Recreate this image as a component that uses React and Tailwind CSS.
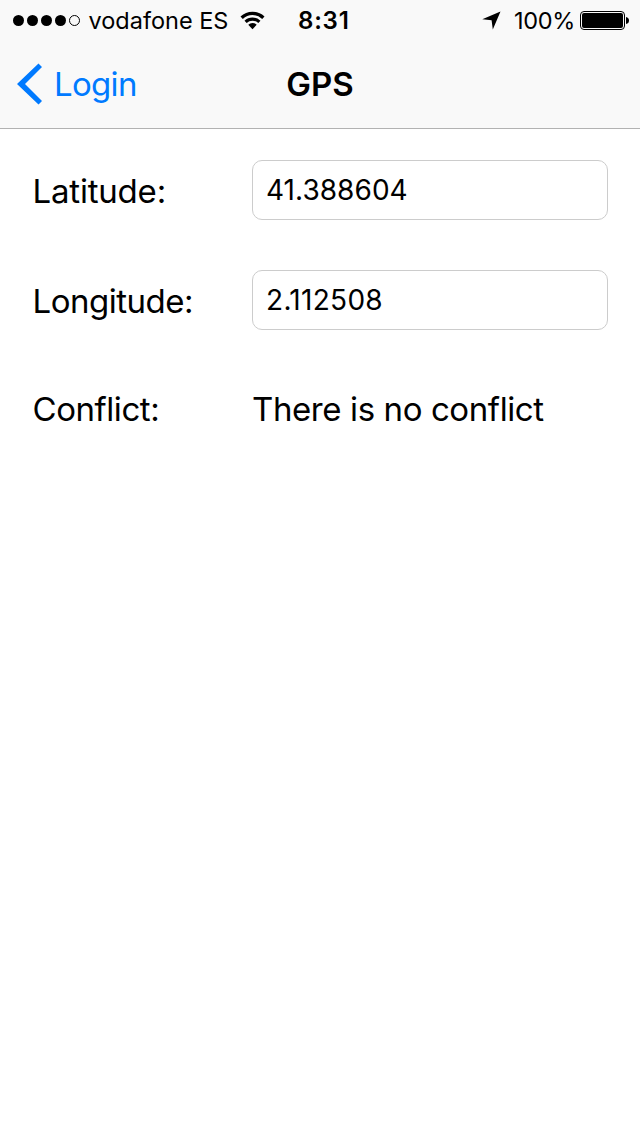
function StatusBar() {
  return (
    <div className="flex h-[41px] items-center pl-[13px] pr-[11px] text-[23.5px] leading-[41px]">
      <svg width="68" height="13" viewBox="0 0 68 13" className="shrink-0">
        <circle cx="5.5" cy="6.5" r="5.5" />
        <circle cx="19.5" cy="6.5" r="5.5" />
        <circle cx="33.5" cy="6.5" r="5.5" />
        <circle cx="47.5" cy="6.5" r="5.5" />
        <circle cx="61.5" cy="6.5" r="5" fill="none" stroke="black" />
      </svg>
      <span className="ml-[7.5px] w-[140px] whitespace-nowrap">vodafone ES</span>
      <svg width="25" height="19" viewBox="0 0 25 19" className="ml-[11.5px] shrink-0">
        <path d="M0.500 5.500A17.500 17.500 0 0 1 24.500 5.500L22.200 7.900A14 14 0 0 0 2.800 7.900Z" />
        <path d="M4.500 9.700A11.500 11.500 0 0 1 20.500 9.700L18.300 12A8.300 8.300 0 0 0 6.700 12Z" />
        <path d="M8.300 13.700A6 6 0 0 1 16.700 13.700L12.500 18.200Z" />
      </svg>
      <span className="ml-[33px] w-[54px] whitespace-nowrap text-[24px] font-semibold tracking-[0.8px]">8:31</span>
      <svg width="19" height="19" viewBox="0 0 19 19" className="ml-auto shrink-0">
        <path d="M18.500 0.500L10.800 18.500L9.600 9.200L0.300 8.300Z" />
      </svg>
      <span className="ml-[13px] w-[61px] whitespace-nowrap tracking-[-0.3px]">100%</span>
      <svg width="49" height="19" viewBox="0 0 49 19" className="ml-[5px] shrink-0">
        <rect x="0.500" y="0.500" width="44" height="18" rx="3.500" fill="none" stroke="black" />
        <rect x="2" y="2" width="41" height="15" rx="2" />
        <path d="M46 6Q49 6.500 49 9.500Q49 12.500 46 13Z" />
      </svg>
    </div>
  );
}

function Row({ label, tracking, children }) {
  return (
    <div className="flex h-[60px] items-center">
      <span className={`w-[219.500px] whitespace-nowrap text-[33px] leading-[40px] ${tracking}`}>{label}</span>
      {children}
    </div>
  );
}

function Value({ tracking, children }) {
  return (
    <div className={`flex h-[60px] w-[356px] items-center rounded-[10px] border border-[#cccccc] bg-white pl-[13px] text-[28px] ${tracking}`}>
      {children}
    </div>
  );
}

export default function App() {
  return (
    <main className="min-h-[1136px] w-[640px] bg-white font-['Inter',sans-serif] text-black">
      <header className="h-[129px] border-b border-[#b2b2b2] bg-[#f9f9f9]">
        <StatusBar />
        <nav className="grid h-[87px] grid-cols-[1fr_auto_1fr] items-center px-[17px] text-[33px]">
          <a className="flex items-center gap-[12px] text-[#007aff]">
            <svg width="25" height="44" viewBox="0 0 25 44">
              <path d="M21.500 0.500L25 4L8 21L25 38L21.500 41.500L0 21Z" fill="#007aff" />
            </svg>
            <span className="tracking-[-0.700px]">Login</span>
          </a>
          <h1 className="font-semibold">GPS</h1>
        </nav>
      </header>
      <section className="flex flex-col gap-[50px] pl-[32.500px] pt-[31px]">
        <Row label="Latitude:" tracking="pt-[1px] tracking-[-0.200px]">
          <Value tracking="tracking-[0.050px]">41.388604</Value>
        </Row>
        <Row label="Longitude:" tracking="pt-[1px] tracking-[-0.500px]">
          <Value tracking="tracking-[0.300px]">2.112508</Value>
        </Row>
        <Row label="Conflict:" tracking="pb-[2px] tracking-[-0.450px]">
          <span className="whitespace-nowrap pb-[2px] text-[33px] leading-[40px] tracking-[-0.400px]">There is no conflict</span>
        </Row>
      </section>
    </main>
  );
}
